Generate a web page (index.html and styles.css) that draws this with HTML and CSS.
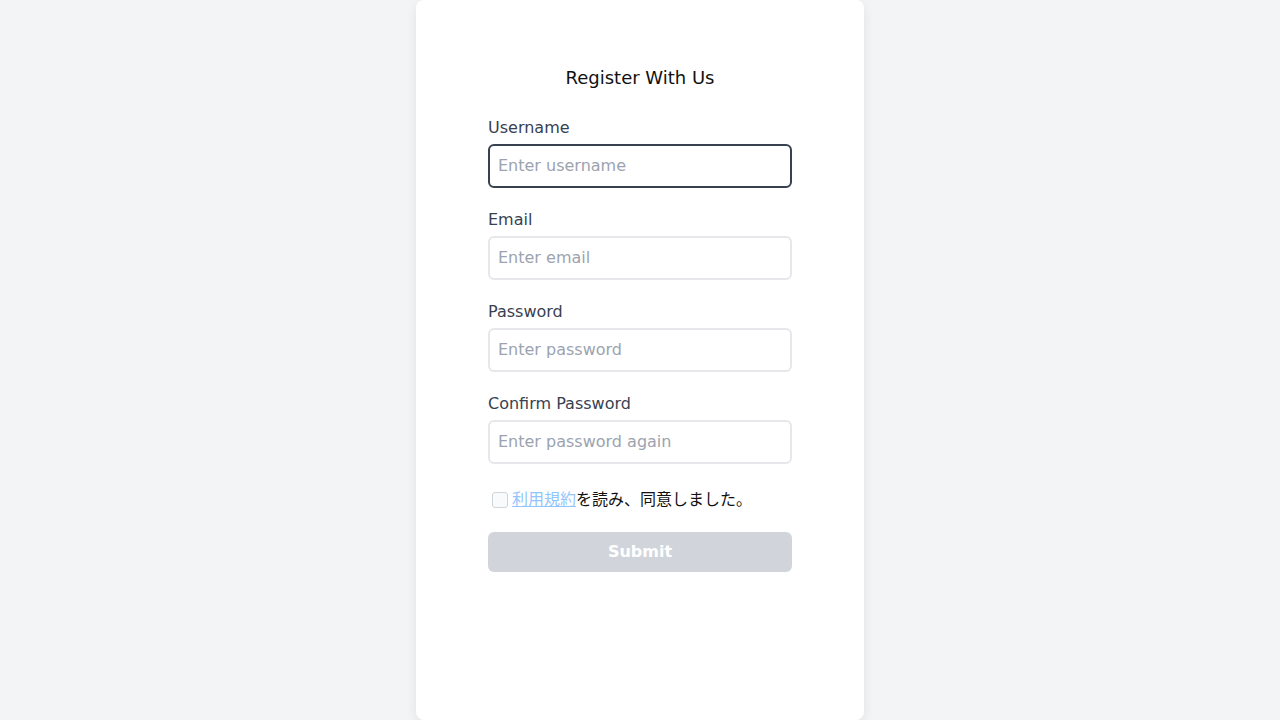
FILE: index.html
```html
<!DOCTYPE html>
<html lang="ja">
<head>
<meta charset="utf-8">
<title>Register</title>
<link rel="stylesheet" href="styles.css">
</head>
<body>
<main class="card">
  <h1 class="title">Register With Us</h1>
  <form class="form">
    <div class="field">
      <label class="label" for="u">Username</label>
      <input class="input input-focus" id="u" type="text" placeholder="Enter username">
    </div>
    <div class="field">
      <label class="label" for="e">Email</label>
      <input class="input" id="e" type="email" placeholder="Enter email">
    </div>
    <div class="field">
      <label class="label" for="p">Password</label>
      <input class="input" id="p" type="password" placeholder="Enter password">
    </div>
    <div class="field">
      <label class="label" for="c">Confirm Password</label>
      <input class="input" id="c" type="password" placeholder="Enter password again">
    </div>
    <div class="agree">
      <span class="check"></span>
      <span class="agree-text"><a class="terms" href="#">利用規約</a>を読み、同意しました。</span>
    </div>
    <button class="submit" type="button">Submit</button>
  </form>
</main>
</body>
</html>
```

FILE: styles.css
```css
* { box-sizing: border-box; }
html, body { margin: 0; padding: 0; }
body {
  background: #f3f4f6;
  font-family: "DejaVu Sans", "Noto Sans CJK JP", sans-serif;
  display: flex;
  justify-content: center;
  height: 720px;
}
.card {
  width: 448px;
  height: 720px;
  background: #fff;
  border-radius: 8px;
  box-shadow: 0 4px 12px rgba(0,0,0,0.08);
  padding: 64px 72px 0;
}
.title {
  margin: 0 0 24px;
  font-size: 18px;
  line-height: 28px;
  font-weight: 400;
  text-align: center;
  color: #111;
}
.form { display: flex; flex-direction: column; }
.field { display: flex; flex-direction: column; gap: 4px; margin-bottom: 20px; }
.label { font-size: 16px; line-height: 24px; color: #374151; }
.input {
  width: 304px;
  height: 44px;
  border: 2px solid #e5e7eb;
  border-radius: 6px;
  padding: 0 8px 2px;
  font-family: inherit;
  font-size: 16px;
  color: #111;
  outline: none;
  background: #fff;
}
.input::placeholder { color: #9ca3af; }
.input-focus { border-color: #374151; }
.agree {
  display: flex;
  align-items: center;
  margin-top: 4px;
  height: 24px;
  font-size: 16px;
  line-height: 24px;
  color: #111;
}
.check {
  width: 16px;
  height: 16px;
  margin: 0 4px;
  border: 1px solid #d1d5db;
  border-radius: 3px;
  background: #f9fafb;
}
.agree-text { font-family: "DejaVu Sans", "Noto Sans CJK JP", sans-serif; }
.terms { color: #93c5fd; text-decoration: underline; }
.submit {
  margin-top: 20px;
  width: 304px;
  height: 40px;
  border: none;
  border-radius: 6px;
  background: #d1d5db;
  color: #fff;
  font-family: inherit;
  font-size: 16px;
  font-weight: 700;
  padding: 0 0 2px;
}
```
